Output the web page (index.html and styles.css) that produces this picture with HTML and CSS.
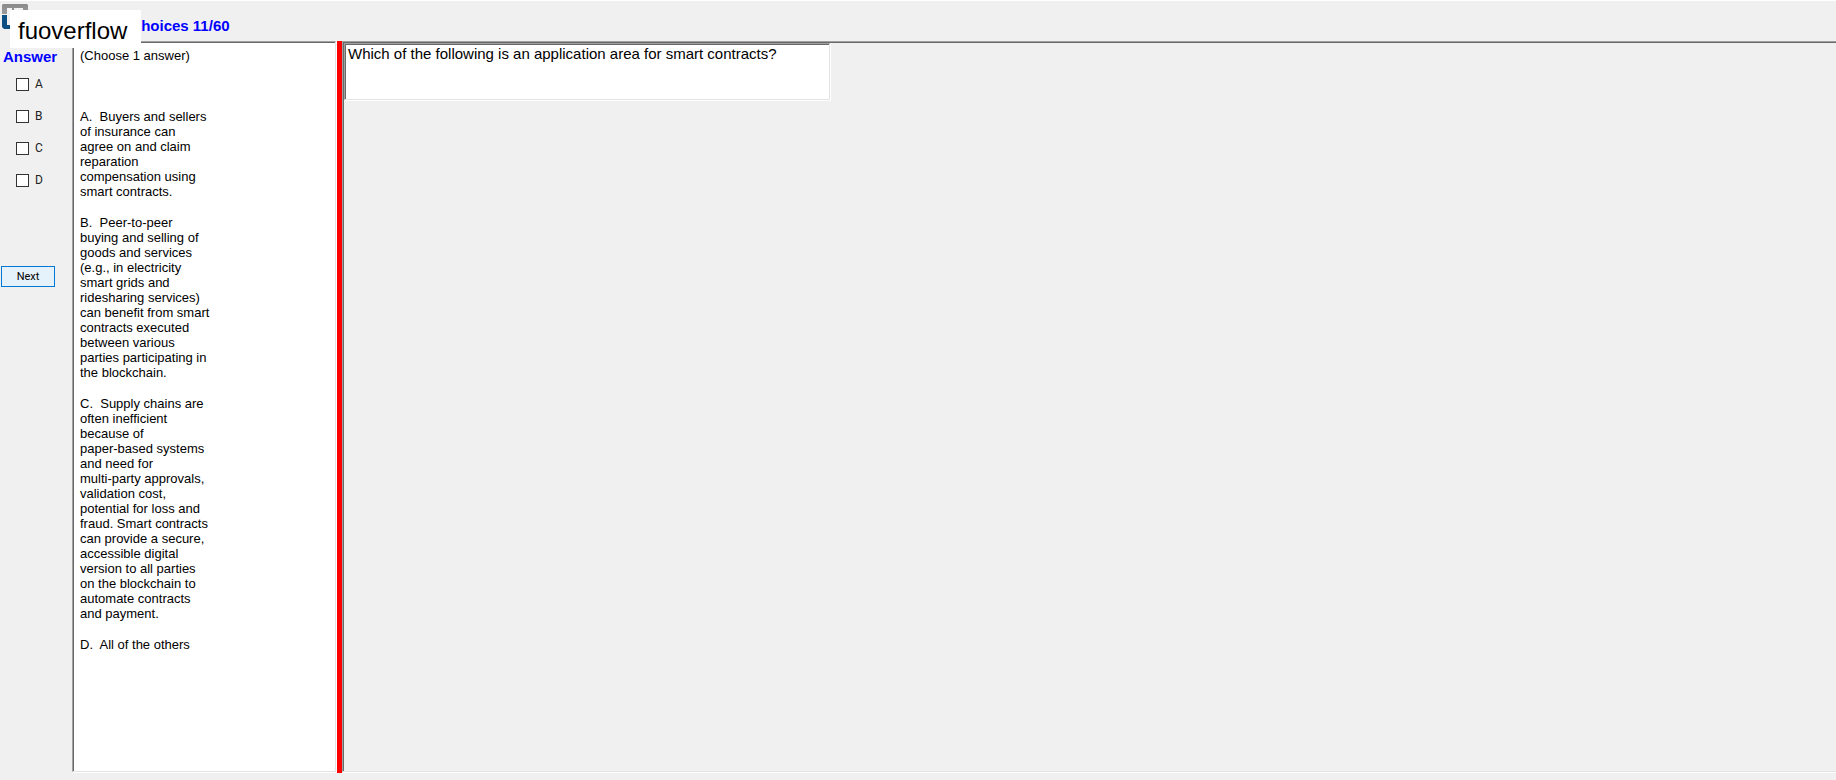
FILE: index.html
```html
<!DOCTYPE html>
<html lang="en">
  <head>
    <meta charset="UTF-8" />
    <meta name="viewport" content="width=device-width, initial-scale=1.0" />
    <title>Multiple choices 11/60</title>
    <link rel="stylesheet" href="styles.css">
  </head>
  <body>
    <header class="top-bar">
      <svg class="logo" viewBox="0 0 26 26" aria-hidden="true">
        <defs>
          <linearGradient id="steel" x1="0" y1="0" x2="0" y2="1">
            <stop offset="0" stop-color="#8a8a8a" />
            <stop offset="1" stop-color="#b0b0b0" />
          </linearGradient>
        </defs>
        <path d="M1 0h24l1 1v23h-5V4h-3v5h-4V4h-2v5H8V4H5v6H0V1z" fill="url(#steel)" />
        <path d="M5 4h5v6H5zM14 4h4v6h-4z" fill="#f4f4f4" />
        <path d="M0 11h5v10h16v4H2l-2-2z" fill="#0b4f82" />
      </svg>
      <h1 class="title">Multiple choices 11/60</h1>
    </header>
    <div class="watermark">fuoverflow</div>

    <main class="exam">
      <form class="answer-form">
        <h2 class="answer-title">Answer</h2>
        <label class="choice"><input type="checkbox" name="answer" value="A" />A</label>
        <label class="choice"><input type="checkbox" name="answer" value="B" />B</label>
        <label class="choice"><input type="checkbox" name="answer" value="C" />C</label>
        <label class="choice"><input type="checkbox" name="answer" value="D" />D</label>
        <button class="next" type="button">Next</button>
      </form>

      <section class="options">
        <p class="hint">(Choose 1 answer)</p>
        <p>A.&nbsp; Buyers and sellers<br />of insurance can<br />agree on and claim<br />reparation<br />compensation using<br />smart contracts.</p>
        <p>B.&nbsp; Peer-to-peer<br />buying and selling of<br />goods and services<br />(e.g., in electricity<br />smart grids and<br />ridesharing services)<br />can benefit from smart<br />contracts executed<br />between various<br />parties participating in<br />the blockchain.</p>
        <p>C.&nbsp; Supply chains are<br />often inefficient<br />because of<br />paper-based systems<br />and need for<br />multi-party approvals,<br />validation cost,<br />potential for loss and<br />fraud. Smart contracts<br />can provide a secure,<br />accessible digital<br />version to all parties<br />on the blockchain to<br />automate contracts<br />and payment.</p>
        <p>D.&nbsp; All of the others</p>
      </section>

      <div class="splitter"></div>

      <section class="question-pane">
        <div class="question">Which of the following is an application area for smart contracts?</div>
      </section>
    </main>
  </body>
</html>
```

FILE: styles.css
```css
* {
  box-sizing: border-box;
}
body {
  margin: 0;
  min-height: 100vh;
  display: flex;
  flex-direction: column;
  position: relative;
  background: #f0f0f0;
  color: #000;
  font-family: "Liberation Sans", Arial, sans-serif;
  font-size: 13px;
  line-height: 15px;
}
h1,
h2,
p {
  margin: 0;
}

/* header */
.top-bar {
  display: flex;
  align-items: center;
  height: 41px;
  padding-left: 2px;
  border-top: 1px solid #fff;
}
.logo {
  width: 26px;
  height: 26px;
  margin-bottom: 8px;
}
.title,
.answer-title {
  color: #00f;
  font-size: 15px;
  font-weight: 700;
  line-height: 16px;
}
.title {
  padding: 10px 0 0 44px;
}
.watermark {
  position: absolute;
  top: 10px;
  left: 10px;
  padding: 4px 14px 0 8px;
  background: #fff;
  font-size: 24px;
  line-height: 34px;
}

/* main area */
.exam {
  flex: 1;
  display: grid;
  grid-template-columns: 72px 265px 5px 1fr;
  padding-bottom: 8px;
}
.answer-form {
  padding-top: 8px;
}
.answer-title {
  padding-left: 3px;
}
.choice {
  display: flex;
  align-items: center;
  gap: 6px;
  height: 32px;
  padding-left: 16px;
  color: #222;
  font-family: Roboto, sans-serif;
  font-size: 12px;
}
.choice:first-of-type {
  margin-top: 3px;
}
.choice input {
  appearance: none;
  width: 13px;
  height: 13px;
  margin: 0;
  border: 1px solid #333;
  background: #fff;
}
.choice input:checked {
  background: #0078d7;
}
.next {
  width: 54px;
  height: 21px;
  margin: 70px 0 0 1px;
  padding: 0;
  border: 1px solid #0078d7;
  background: #e5f1fb;
  color: #000;
  font-family: Roboto, sans-serif;
  font-size: 11px;
}

/* sunken panels */
.options,
.question-pane,
.question {
  border: 1px solid;
  border-color: #a0a0a0 #e3e3e3 #e3e3e3 #a0a0a0;
  box-shadow: inset 1px 1px 0 #696969, 1px 1px 0 #fff;
}
.options,
.question {
  background: #fff;
}
.options {
  margin-right: 1px;
  padding: 6px 7px;
}
.options p {
  margin-bottom: 16px;
}
.options .hint {
  margin-bottom: 46px;
}
.splitter {
  margin-bottom: -1px;
  background: #f00;
}
.question-pane {
  padding: 1px 0 0 1px;
  border-right: 0;
}
.question {
  width: 486px;
  max-width: 100%;
  min-height: 57px;
  padding: 1px 3px;
  font-size: 15px;
  line-height: 17px;
}
```
